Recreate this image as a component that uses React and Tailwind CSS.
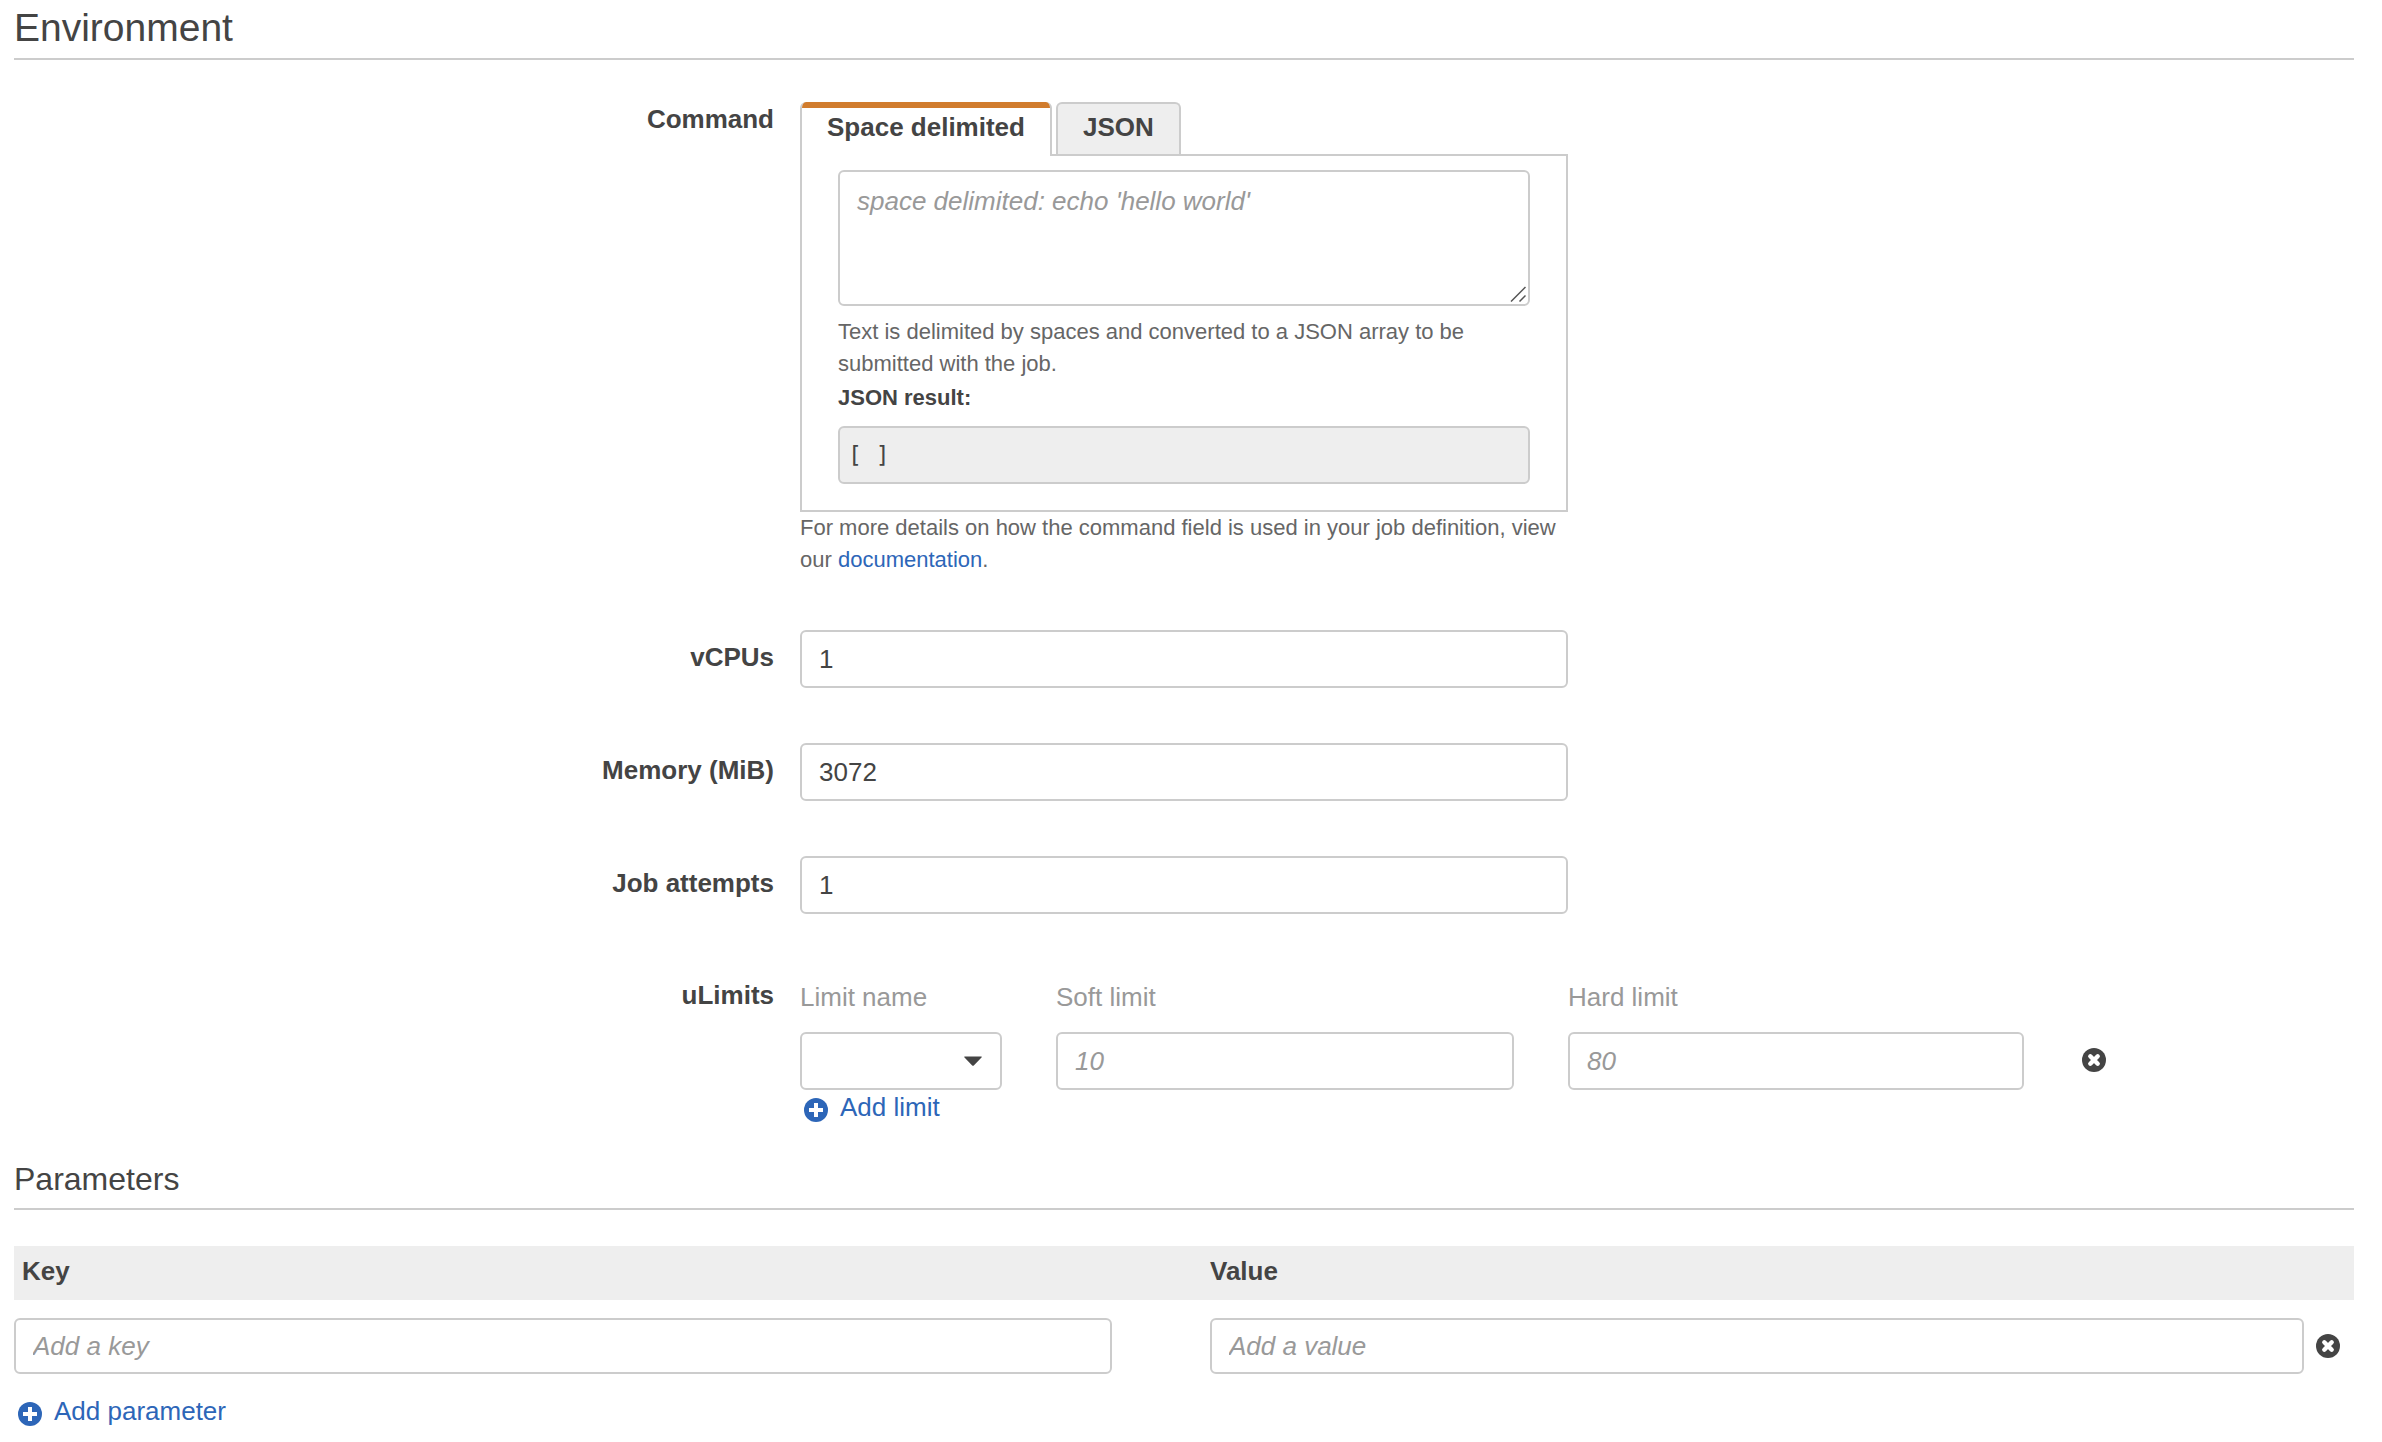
import { useState } from "react";

const field =
  "block w-full rounded-md border-2 border-[#ccc] bg-white px-[17px] text-[26px] leading-[34px] text-[#444] outline-none placeholder:italic placeholder:text-[#999] placeholder:opacity-100";
const label = "text-right text-[26px] leading-[34px] font-bold";
const row = "grid grid-cols-[760fr_768fr_760fr] gap-x-[26px]";

function PlusIcon() {
  return (
    <svg viewBox="0 0 24 24" className="mt-2 size-6 shrink-0" aria-hidden="true">
      <circle cx="12" cy="12" r="12" fill="#2d66b8" />
      <path d="M12 5v14M5 12h14" stroke="#fff" strokeWidth="4" />
    </svg>
  );
}

function RemoveButton({ name }) {
  return (
    <button type="button" aria-label={name} className="size-6 shrink-0">
      <svg viewBox="0 0 24 24" className="block size-6" aria-hidden="true">
        <circle cx="12" cy="12" r="12" fill="#444" />
        <path d="M8.3 8.3l7.4 7.4M15.7 8.3l-7.4 7.4" stroke="#fff" strokeWidth="4.4" strokeLinecap="round" />
      </svg>
    </button>
  );
}

function AddButton({ children }) {
  return (
    <button type="button" className="flex items-start gap-3 pl-1 text-[26px] leading-[34px] text-[#2d66b8]">
      <PlusIcon />
      {children}
    </button>
  );
}

function NumberRow({ id, name, value }) {
  return (
    <div className={row}>
      <label htmlFor={id} className={label + " pt-2.5"}>
        {name}
      </label>
      <input id={id} type="text" defaultValue={value} className={field + " h-[58px]"} />
    </div>
  );
}

function CommandRow() {
  const [command, setCommand] = useState("");
  const parts = command.split(" ").filter(Boolean);
  const result = parts.length ? JSON.stringify(parts) : "[ ]";
  return (
    <div className={row}>
      <label htmlFor="command" className={label}>
        Command
      </label>
      <div>
        <div role="tablist" className="flex items-stretch gap-1 text-[26px] leading-[34px] font-bold">
          <button
            type="button"
            role="tab"
            aria-selected="true"
            className="relative z-10 -mb-0.5 flex h-[54px] flex-col overflow-hidden rounded-t-md border-x-2 border-[#ccc] bg-white"
          >
            <span className="-mx-0.5 h-1.5 self-stretch bg-[#d17c2d]" />
            <span className="px-[25px] pt-0.5">Space delimited</span>
          </button>
          <button
            type="button"
            role="tab"
            aria-selected="false"
            className="h-[52px] rounded-t-md border-2 border-b-0 border-[#ccc] bg-[#eee] px-[25px] pt-1.5 pb-2.5"
          >
            JSON
          </button>
        </div>
        <div role="tabpanel" className="border-2 border-[#ccc] px-9 pt-3.5 pb-[26px]">
          <div className="relative">
            <textarea
              id="command"
              value={command}
              onChange={(e) => setCommand(e.target.value)}
              placeholder="space delimited: echo 'hello world'"
              className={field + " h-[136px] resize-none pt-3"}
            />
            <svg viewBox="0 0 18 18" className="pointer-events-none absolute right-1 bottom-1 size-[18px]" aria-hidden="true">
              <path d="M3 17.500 17.500 3M11.500 17.500 17.500 11.500" stroke="#555" strokeWidth="1.500" />
            </svg>
          </div>
          <p className="mt-2.5 text-[22px] leading-[32px] text-[#666]">
            Text is delimited by spaces and converted to a JSON array to be submitted with the job.
          </p>
          <p className="mt-0.5 text-[22px] leading-[32px] font-bold">JSON result:</p>
          <output
            htmlFor="command"
            className="mt-3 block min-h-[58px] rounded-md border-2 border-[#ccc] bg-[#eee] px-2 py-3 font-['DejaVu_Sans_Mono',monospace] text-[23px] leading-[30px]"
          >
            {result}
          </output>
        </div>
        <p className="text-[22px] leading-[32px] text-[#666]">
          For more details on how the command field is used in your job definition, view our{" "}
          <a href="#documentation" className="text-[#2d66b8]">
            documentation
          </a>
          .
        </p>
      </div>
    </div>
  );
}

function LimitsRow() {
  const head = "mb-[18px] block pt-0.5 text-[26px] leading-[34px] text-[#999]";
  return (
    <div className={row}>
      <div className={label}>uLimits</div>
      <div className="col-span-2">
        <div className="grid grid-cols-[202fr_458fr_456fr_276fr] gap-x-[54px]">
          <div>
            <label htmlFor="limit-name" className={head}>
              Limit name
            </label>
            <div className="relative">
              <select id="limit-name" className={field + " h-[58px] appearance-none"}>
                <option></option>
              </select>
              <svg viewBox="0 0 18 10" className="pointer-events-none absolute top-6 right-5 h-2.5 w-[18px]" aria-hidden="true">
                <path d="M0.500 0.500h17q0.500 0.500 0 1L9.800 9.500q-0.800 0.700-1.600 0L0.500 1.500q-0.500-0.500 0-1z" fill="#444" />
              </svg>
            </div>
          </div>
          <div>
            <label htmlFor="soft-limit" className={head}>
              Soft limit
            </label>
            <input id="soft-limit" type="text" placeholder="10" className={field + " h-[58px]"} />
          </div>
          <div>
            <label htmlFor="hard-limit" className={head}>
              Hard limit
            </label>
            <input id="hard-limit" type="text" placeholder="80" className={field + " h-[58px]"} />
          </div>
          <div className="flex items-end pb-[18px] pl-1">
            <RemoveButton name="Remove limit" />
          </div>
        </div>
        <AddButton>Add limit</AddButton>
      </div>
    </div>
  );
}

export default function App() {
  return (
    <main className="min-h-screen bg-white pr-7 pb-3.5 pl-3.5 font-['Liberation_Sans',Arial,sans-serif] text-[#444]">
      <h1 className="border-b-2 border-[#ccc] pt-1 pb-1.5 text-[39px] leading-[48px]">Environment</h1>
      <form className="mt-[42px]">
        <CommandRow />
        <div className="mt-[54px] mb-16 flex flex-col gap-[55px]">
          <NumberRow id="vcpus" name="vCPUs" value="1" />
          <NumberRow id="memory" name="Memory (MiB)" value="3072" />
          <NumberRow id="attempts" name="Job attempts" value="1" />
        </div>
        <LimitsRow />
      </form>
      <h2 className="mt-[34px] border-b-2 border-[#ccc] pb-2 text-[32px] leading-[42px]">Parameters</h2>
      <table className="mt-9 w-full table-fixed border-collapse text-[26px] leading-[34px]">
        <thead>
          <tr className="bg-[#eee] text-left">
            <th scope="col" className="w-[51.11%] pt-2 pb-3 pl-2 font-bold">
              Key
            </th>
            <th scope="col" className="pt-2 pb-3 font-bold">
              Value
            </th>
          </tr>
        </thead>
        <tbody>
          <tr>
            <td className="pt-[18px] pr-[98px]">
              <input type="text" aria-label="Key" placeholder="Add a key" className={field + " h-14"} />
            </td>
            <td className="pt-[18px] pr-3.5">
              <div className="flex items-center gap-3">
                <input type="text" aria-label="Value" placeholder="Add a value" className={field + " h-14"} />
                <RemoveButton name="Remove parameter" />
              </div>
            </td>
          </tr>
        </tbody>
      </table>
      <div className="mt-5">
        <AddButton>Add parameter</AddButton>
      </div>
    </main>
  );
}
